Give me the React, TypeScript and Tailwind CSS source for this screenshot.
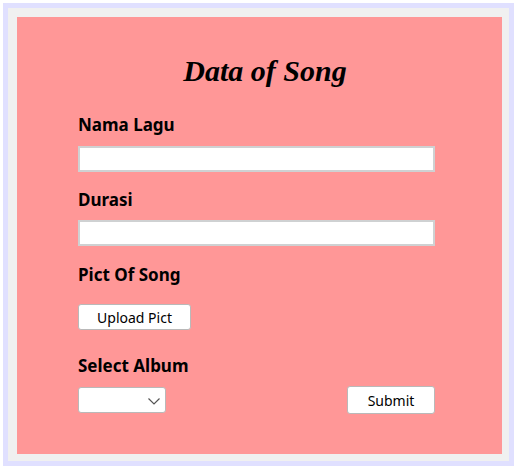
export default function App() {
  return (
    <div className="w-[518px] h-[471px] bg-white pt-[3px] pl-[3px]" style={{ fontFamily: '"Noto Sans", sans-serif' }}>
      <div className="w-[511px] border-[5px] border-[#e0e0ff] bg-[#f0f0f0] pl-[9px] pt-[9px] pr-[7px] pb-[7px]">
        <div className="w-[485px] h-[437px] bg-[#ff9797] pl-[61px] pr-[68px] pt-[37px]">
          {/* Title */}
          <h1
            className="text-center text-[30px] leading-[34px] font-bold italic text-black pl-[18px]"
            style={{ fontFamily: '"Liberation Serif", serif' }}
          >
            Data of Song
          </h1>

          <label className="block mt-[26px] text-[17px] leading-[22px] font-bold text-black">Nama Lagu</label>
          <input type="text" className="block mt-[10px] w-[357px] h-[26px] bg-white border-2 border-[#cfd1d2]" />

          <label className="block mt-[17px] text-[17px] leading-[22px] font-bold text-black">Durasi</label>
          <input type="text" className="block mt-[9px] w-[357px] h-[26px] bg-white border-2 border-[#cfd1d2]" />

          <label className="block mt-[18px] text-[17px] leading-[22px] font-bold text-black">Pict Of Song</label>
          <button className="block mt-[18px] w-[113px] h-[26px] bg-white border border-[#b9b9b9] rounded-[3px] text-[14px] text-black">
            Upload Pict
          </button>

          <label className="block mt-[25px] text-[17px] leading-[22px] font-bold text-black">Select Album</label>
          <div className="mt-[10px] flex items-start justify-between w-[357px]">
            <div className="relative w-[88px] h-[26px] bg-white border border-[#b9b9b9] rounded-[3px]">
              <svg className="absolute left-[69px] top-[10px]" width="12" height="7" viewBox="0 0 12 7">
                <path d="M0.5 0.5 L6 6 L11.5 0.5" fill="none" stroke="#555" strokeWidth="1.2" />
              </svg>
            </div>
            <button className="w-[88px] h-[28px] -mt-[1px] bg-white border border-[#b9b9b9] rounded-[3px] text-[14px] text-black">
              Submit
            </button>
          </div>
        </div>
      </div>
    </div>
  )
}
